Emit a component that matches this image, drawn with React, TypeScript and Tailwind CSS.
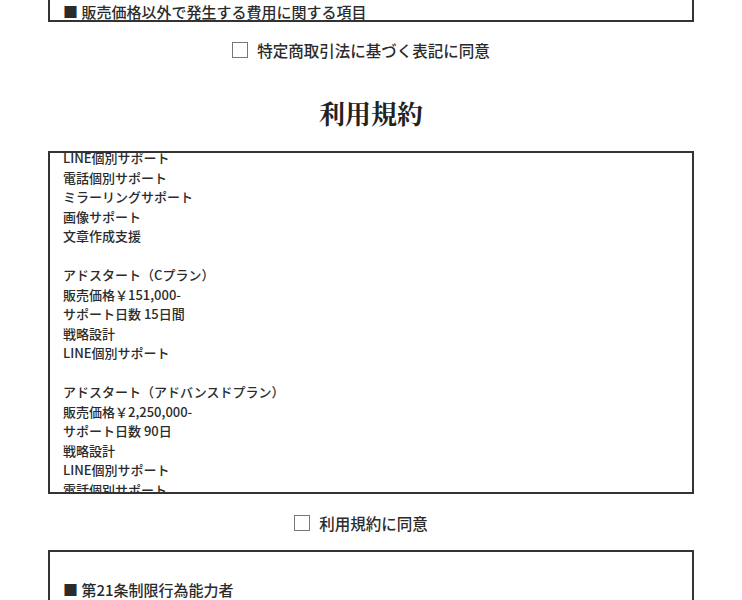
import React from "react";

const lines = [
  "LINE個別サポート",
  "電話個別サポート",
  "ミラーリングサポート",
  "画像サポート",
  "文章作成支援",
  "",
  "アドスタート（Cプラン）",
  "販売価格￥151,000-",
  "サポート日数 15日間",
  "戦略設計",
  "LINE個別サポート",
  "",
  "アドスタート（アドバンスドプラン）",
  "販売価格￥2,250,000-",
  "サポート日数 90日",
  "戦略設計",
  "LINE個別サポート",
  "電話個別サポート",
  "ミラーリングサポート",
  "画像サポート",
];

function Check({ label }: { label: string }) {
  return (
    <label className="flex items-center justify-center gap-[9px] h-6 pr-[20px] text-[15.5px] leading-6 font-medium">
      <span className="block w-[16px] h-[16px] border border-[#777] bg-white" />
      <span>{label}</span>
    </label>
  );
}

export default function App() {
  return (
    <div
      className="bg-white text-[#2b2b2b] min-h-[600px] overflow-hidden"
      style={{ fontFamily: '"Noto Sans CJK JP", "Noto Sans", sans-serif' }}
    >
      <div className="w-[646px] mx-auto">
        <div className="border-2 border-t-0 border-[#333] pl-[13px] pt-[4px]">
          <p className="text-[15px] leading-[16px] font-medium">■ 販売価格以外で発生する費用に関する項目</p>
        </div>

        <div className="mt-[16px]">
          <Check label="特定商取引法に基づく表記に同意" />
        </div>

        <h2
          className="mt-[33px] text-center text-[26px] leading-[36px] font-bold text-[#222]"
          style={{ fontFamily: '"Noto Serif CJK JP", "Liberation Serif", serif' }}
        >
          利用規約
        </h2>

        <div className="mt-[20px] h-[343px] border-2 border-[#333] overflow-hidden pl-[13px]">
          <div className="mt-[-5px] text-[13px] leading-[19.5px] font-medium">
            {lines.map((l, i) => (
              <div key={i} className="h-[19.5px] whitespace-pre">
                {l}
              </div>
            ))}
          </div>
        </div>

        <div className="mt-[17px]">
          <Check label="利用規約に同意" />
        </div>

        <div className="mt-[15px] border-2 border-b-0 border-[#333] pl-[13px] pt-[26px] h-[80px]">
          <p className="text-[15px] leading-6 font-medium">■ 第21条制限行為能力者</p>
        </div>
      </div>
    </div>
  );
}
